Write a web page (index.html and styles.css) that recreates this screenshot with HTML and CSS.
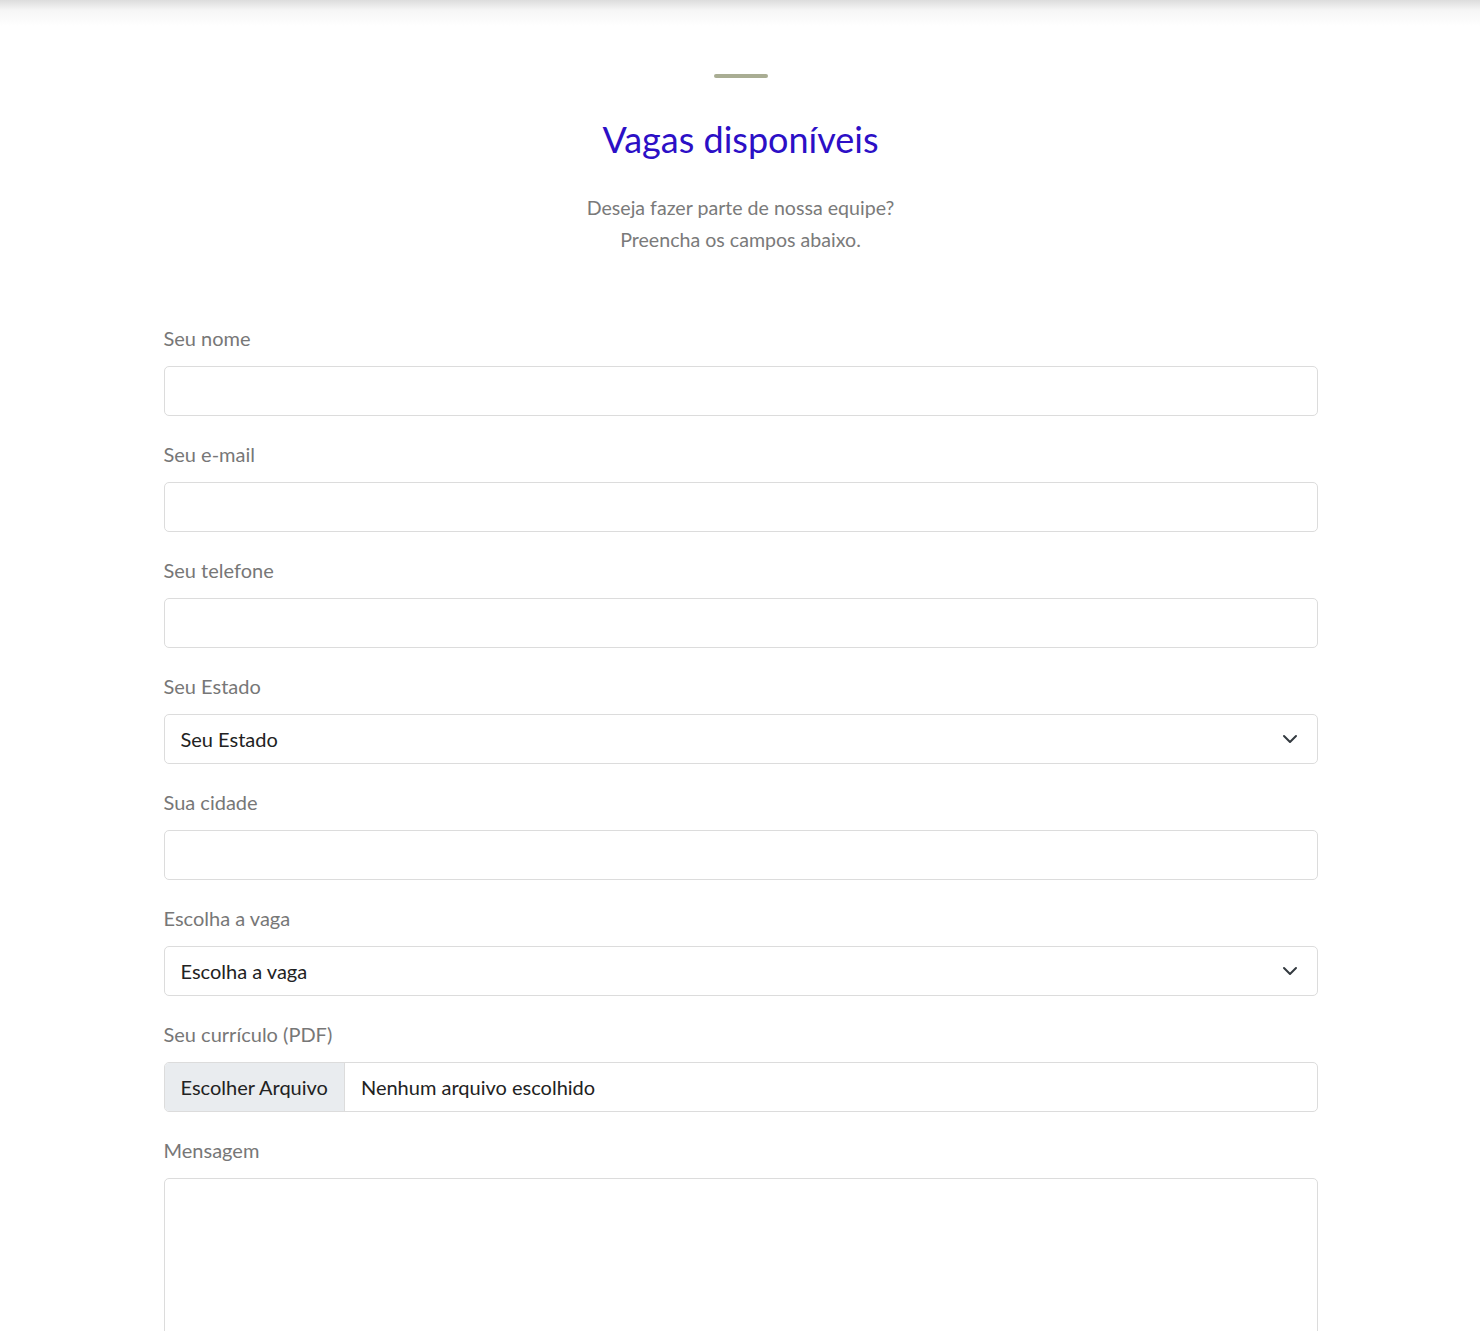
FILE: index.html
```html
<!DOCTYPE html>
<html lang="pt-BR">
<head>
  <meta charset="UTF-8" />
  <title>Vagas disponíveis</title>
  <link rel="stylesheet" href="styles.css">
</head>
<body>
  <div class="topbar"></div>
  <section class="vagas">
    <div class="divider"></div>
    <h2>Vagas disponíveis</h2>
    <p class="intro">Deseja fazer parte de nossa equipe?<br>Preencha os campos abaixo.</p>

    <form class="form" onsubmit="event.preventDefault()">
      <div class="field">
        <label for="nome">Seu nome</label>
        <input type="text" id="nome">
      </div>
      <div class="field">
        <label for="email">Seu e-mail</label>
        <input type="email" id="email">
      </div>
      <div class="field">
        <label for="telefone">Seu telefone</label>
        <input type="tel" id="telefone">
      </div>
      <div class="field">
        <label for="estado">Seu Estado</label>
        <div class="select-wrap">
          <select id="estado">
            <option>Seu Estado</option>
          </select>
          <svg class="chevron" viewBox="0 0 16 16" width="16" height="16"><path d="M2 5l6 6 6-6" fill="none" stroke="#343a40" stroke-width="2" stroke-linecap="round" stroke-linejoin="round"/></svg>
        </div>
      </div>
      <div class="field">
        <label for="cidade">Sua cidade</label>
        <input type="text" id="cidade">
      </div>
      <div class="field">
        <label for="vaga">Escolha a vaga</label>
        <div class="select-wrap">
          <select id="vaga">
            <option>Escolha a vaga</option>
          </select>
          <svg class="chevron" viewBox="0 0 16 16" width="16" height="16"><path d="M2 5l6 6 6-6" fill="none" stroke="#343a40" stroke-width="2" stroke-linecap="round" stroke-linejoin="round"/></svg>
        </div>
      </div>
      <div class="field">
        <label for="curriculo">Seu currículo (PDF)</label>
        <div class="file-input" id="curriculo">
          <span class="file-btn">Escolher Arquivo</span>
          <span class="file-name">Nenhum arquivo escolhido</span>
        </div>
      </div>
      <div class="field">
        <label for="mensagem">Mensagem</label>
        <textarea id="mensagem"></textarea>
      </div>
    </form>
  </section>
</body>
</html>
```

FILE: styles.css
```css
body {
  font-family: 'Lato', 'Open Sans', sans-serif;
  background: #fff;
  margin: 0;
  padding: 0;
  color: #212529;
}
.topbar {
  height: 26px;
  background: linear-gradient(to bottom, #dcdcdc, #f6f6f6 40%, #fff);
}
.vagas {
  width: 1154px;
  margin: 0 auto;
  padding-left: 1px;
  text-align: center;
}
.divider {
  width: 54px;
  height: 4px;
  margin: 48px auto 0;
  border-radius: 2px;
  background: #a9ad93;
}
h2 {
  margin: 38px 0 0;
  font-size: 36px;
  line-height: 46px;
  font-weight: 400;
  color: #2c0fc6;
}
.intro {
  margin: 30px 0 0;
  font-size: 19.6px;
  line-height: 32px;
  color: #7a7a7a;
}
.form {
  margin-top: 70px;
  text-align: left;
}
.field {
  margin-bottom: 26px;
}
label {
  display: block;
  margin-bottom: 16px;
  font-size: 20px;
  line-height: 24px;
  color: #777;
}
input, select, textarea, .file-input {
  display: block;
  box-sizing: border-box;
  width: 100%;
  height: 50px;
  padding: 0 16px;
  border: 1px solid #dcdcdc;
  border-radius: 5px;
  background: #fff;
  font-family: inherit;
  font-size: 20px;
  color: #222;
  outline: none;
}
.select-wrap {
  position: relative;
}
select {
  appearance: none;
  -webkit-appearance: none;
}
.chevron {
  position: absolute;
  right: 20px;
  top: 17px;
  pointer-events: none;
}
.file-input {
  display: flex;
  align-items: center;
  padding: 0;
  overflow: hidden;
}
.file-btn {
  display: flex;
  align-items: center;
  height: 100%;
  padding: 0 16px;
  background: #e9ecef;
  border-right: 1px solid #dcdcdc;
}
.file-name {
  padding: 0 16px;
}
textarea {
  height: 200px;
  resize: none;
}
```
